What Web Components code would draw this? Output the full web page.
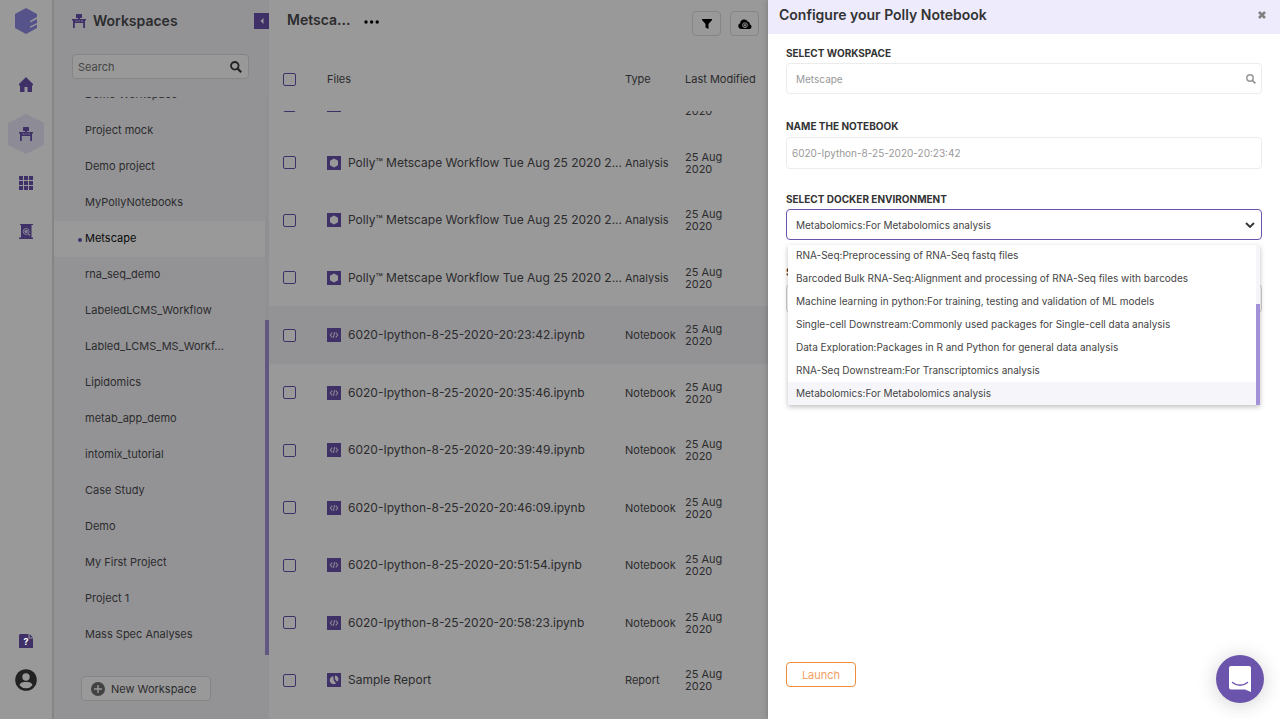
<!DOCTYPE html>
<html lang="en">
<head>
<meta charset="utf-8">
<title>Polly Workspaces</title>
<style>
  html, body { height: 100%; margin: 0; }
  body {
    font-family: Inter, "Liberation Sans", sans-serif;
    font-size: 11px;
    color: #4a4a4d;
    --purple: #6a53ae;
    --lavender: #edebfc;
    --panel: #f6f6fa;
    --thumb: #a391d8;
    --line: #dedede;
  }
</style>
</head>
<body>
<app-shell>
  <nav-rail slot="rail"></nav-rail>
  <workspace-panel slot="side">
    <workspace-item>Demo Workspace</workspace-item>
    <workspace-item>Project mock</workspace-item>
    <workspace-item>Demo project</workspace-item>
    <workspace-item>MyPollyNotebooks</workspace-item>
    <workspace-item selected>Metscape</workspace-item>
    <workspace-item>rna_seq_demo</workspace-item>
    <workspace-item>LabeledLCMS_Workflow</workspace-item>
    <workspace-item>Labled_LCMS_MS_Workf...</workspace-item>
    <workspace-item>Lipidomics</workspace-item>
    <workspace-item>metab_app_demo</workspace-item>
    <workspace-item>intomix_tutorial</workspace-item>
    <workspace-item>Case Study</workspace-item>
    <workspace-item>Demo</workspace-item>
    <workspace-item>My First Project</workspace-item>
    <workspace-item>Project 1</workspace-item>
    <workspace-item>Mass Spec Analyses</workspace-item>
  </workspace-panel>
  <file-browser></file-browser>
  <side-drawer slot="drawer" heading="Configure your Polly Notebook">
    <search-field label="SELECT WORKSPACE" value="Metscape"></search-field>
    <text-field label="NAME THE NOTEBOOK" value="6020-Ipython-8-25-2020-20:23:42"></text-field>
    <select-field open label="SELECT DOCKER ENVIRONMENT"></select-field>
    <select-field label="SELECT MACHINE"></select-field>
    <outline-button slot="footer">Launch</outline-button>
  </side-drawer>
</app-shell>
<chat-launcher></chat-launcher>

<script>
const ICONS = {
  logo: ['0 0 22 26', '<path d="M11 0 22 6v3l-7 4v1.500l7-3.500v4l-7 3.500V20l7-3.500V20L11 26 0 20V6z" fill="#8e8ae4"/>'],
  home: ['0 0 14 15', '<path d="M7 0 14 7v1.500h-1V15H8.500v-5h-3v5H1V8.500H0V7z"/>'],
  desk: ['0 0 14 14', '<path d="M4.500 0h5A.5.5 0 0 1 10 .500V4H4V.500A.5.500 0 0 1 4.500 0zM6 4h2v1H6z"/><path d="M0 5h14v1.500h-1V14h-1.800V9H2.800v5H1V6.500H0z"/><path d="M3.500 7h2M6.500 7h1.500M9 7h2" stroke="#cfc8ea" stroke-width="1"/>'],
  grid: ['0 0 14 14', '<path d="M0 0h4v4H0zM5 0h4v4H5zM10 0h4v4h-4zM0 5h4v4H0zM5 5h4v4H5zM10 5h4v4h-4zM0 10h4v4H0zM5 10h4v4H5zM10 10h4v4h-4z"/>'],
  report: ['0 0 14 15', '<path d="M1 0h13v1h-1.500v12.500H14V15H0v-1.500h2V1H1z"/><circle cx="7.200" cy="7.500" r="3" fill="none" stroke="#d9d3f0" stroke-width="1"/><circle cx="7.200" cy="7.500" r="1.800" fill="#d9d3f0"/><path d="m9.500 10 1.500 1.500" stroke="#d9d3f0" stroke-width="1.200"/>'],
  help: ['0 0 14 14', '<path d="M1 0h8.500v4.500H14V14H0V1z"/><path d="M10.500 0 14 3.500h-3.500z"/>'],
  user: ['0 0 22 22', '<circle cx="11" cy="11" r="10.800" fill="#3a3a3a"/><circle cx="11" cy="8" r="3.700" fill="#fff"/><path d="M4.500 16.200c1-3 3.500-3.200 6.500-3.200s5.500.2 6.500 3.200a8.500 8.500 0 0 1-13 0z" fill="#fff"/>'],
  search: ['0 0 12 12', '<circle cx="4.800" cy="4.800" r="3.800" fill="none" stroke="currentColor" stroke-width="1.800"/><path d="m7.600 7.600 3.600 3.600" stroke="currentColor" stroke-width="2.200"/>'],
  plus: ['0 0 14 14', '<circle cx="7" cy="7" r="7"/><path d="M7 3v8M3 7h8" stroke="#fff" stroke-width="1.400"/>'],
  caret: ['0 0 4 6', '<path d="M3.500 0v6L.5 3z"/>'],
  dots: ['0 0 16 4', '<circle cx="2" cy="2" r="1.700"/><circle cx="7.600" cy="2" r="1.700"/><circle cx="13.200" cy="2" r="1.700"/>'],
  filter: ['0 0 10 10', '<path d="M0 0h10v1L6.500 5v5L3.500 8.500V5L0 1z"/>'],
  cloud: ['0 0 14 10', '<path d="M3 10a3 3 0 0 1-.8-5.800A4 4 0 0 1 9.700 2.500 3 3 0 0 1 12 5.400 2.400 2.400 0 0 1 11.500 10z"/><circle cx="7" cy="6.200" r="2.400" fill="none" stroke="#fff" stroke-width=".9"/><path d="M7 4.800v2.800M5.600 6.200h2.800" stroke="#fff" stroke-width=".9"/>'],
  analysis: ['0 0 14 14', '<path d="M0 0h14v14H0z"/><path d="m7 2.500 4 2.200v4.600l-4 2.200-4-2.200V4.700z" fill="#fff"/>'],
  notebook: ['0 0 14 14', '<path d="M0 0h14v14H0z"/><path d="M5.200 4.700 3.300 7l1.900 2.300M8.800 4.700 10.700 7 8.800 9.300M7.600 4.200 6.400 9.800" fill="none" stroke="#e4def4" stroke-width="1.100"/>'],
  pie: ['0 0 14 14', '<path d="M0 0h14v14H0z"/><path d="M6.500 3.500V7L9 10.500A4 4 0 1 1 5 3.600zM8 2.500A4.500 4.500 0 0 1 11.500 7L10 8.800 8 6.300z" fill="#fff"/>'],
  close: ['0 0 8 8', '<path d="m1 1 6 6M7 1 1 7" stroke="currentColor" stroke-width="2.600"/>'],
  chevron: ['0 0 10 6', '<path d="m1 1 4 4 4-4" fill="none" stroke="currentColor" stroke-width="1.800"/>'],
  chat: ['0 0 22 26', '<path d="M2 0h18a2 2 0 0 1 2 2v24l-6-2.500H2a2 2 0 0 1-2-2V2a2 2 0 0 1 2-2z"/><path d="M3.500 16.500c4.500 3.600 10.500 3.600 15 0" fill="none" stroke="#6b54ab" stroke-width="1.500" stroke-linecap="round"/>']
};
const base = '*{box-sizing:border-box}:host([hidden]){display:none}button,input,select{font:inherit;color:inherit;margin:0}button{cursor:pointer}';
const define = (name, css, html) => customElements.define(name, class extends HTMLElement {
  constructor() { super(); this.attachShadow({ mode: 'open' }); }
  connectedCallback() {
    this.shadowRoot.innerHTML = `<style>${base}${css}</style>` + (typeof html === 'function' ? html(this) : html);
  }
});

define('ui-icon', ':host{display:inline-flex;flex:none;color:var(--purple)}svg{display:block}', el => {
  const [box, body] = ICONS[el.getAttribute('name')];
  const [, , w, h] = box.split(' ');
  return `<svg width="${w}" height="${h}" viewBox="${box}" fill="currentColor" aria-hidden="true">${body}</svg>`;
});

define('app-shell', `
  :host{display:grid;grid-template-columns:54px 215px minmax(0,1fr) 40%;grid-template-rows:minmax(0,1fr);height:100vh;position:relative;background:#fff;overflow:hidden}
  ::slotted(*){min-height:0;min-width:0}
  .scrim{position:absolute;inset:0;background:rgba(0,0,0,.4)}
  .drawer{display:grid;position:relative;z-index:1;grid-column:4}
`, `<slot name="rail"></slot><slot name="side"></slot><slot></slot><div class="scrim"></div><div class="drawer"><slot name="drawer"></slot></div>`);

define('nav-item', `
  :host{display:flex;height:49px;justify-content:center}
  a{display:grid;place-items:center;width:36px;color:#fff;text-decoration:none}
  a>*{grid-area:1/1}
  svg{display:none}
  :host([active]) svg{display:block}
  b{z-index:1;font-size:9px;padding-top:2px}
`, el => `<a href="#" aria-label="${el.getAttribute('label')}"><svg width="36" height="40" viewBox="0 0 36 40"><path d="m18 0 18 9v22l-18 9-18-9V9z" fill="#ebe8fa"/></svg><ui-icon name="${el.getAttribute('icon')}"></ui-icon><b><slot></slot></b></a>`);

define('nav-rail', `
  :host{display:block;border-right:2px solid var(--line);background:#fff}
  nav{display:flex;flex-direction:column;align-items:stretch;height:100%;padding:8px 0 20px}
  .logo{align-self:center;margin-bottom:26px}
  .end{margin-top:auto}
  .end nav-item{height:39px}
`, `<nav><ui-icon class="logo" name="logo"></ui-icon>
  <nav-item icon="home" label="Home"></nav-item><nav-item active icon="desk" label="Workspaces"></nav-item>
  <nav-item icon="grid" label="Applications"></nav-item><nav-item icon="report" label="Reports"></nav-item>
  <div class="end"><nav-item icon="help" label="Help">?</nav-item><nav-item icon="user" label="Account"></nav-item></div></nav>`);

define('workspace-item', `
  :host{display:block;flex:none}
  a{display:flex;align-items:center;height:36px;padding:0 0 2px 24px;color:inherit;text-decoration:none;white-space:nowrap}
  a::before{content:"";width:4px;height:4px;border-radius:50%;margin:3px 3px 0 0}
  :host([selected]) a{background:#fff;color:#111}
  :host([selected]) a::before{background:var(--purple)}
`, `<a href="#"><slot></slot></a>`);

define('workspace-panel', `
  :host{display:flex;flex-direction:column;background:var(--panel)}
  header{display:flex;align-items:center;height:42px;padding-left:18px}
  h2{flex:1;margin:0 0 0 7px;font-size:14px;line-height:20px;font-weight:600}
  header button{display:grid;place-items:center;width:15px;height:16px;padding:0;border:0;background:var(--purple)}
  header button ui-icon{color:#fff}
  label{display:flex;align-items:center;margin:12px 20px 18px 18px;height:25px;padding:0 6px 0 5px;border:1px solid var(--line);border-radius:4px;background:#fff}
  label ui-icon{color:#3a3a3a}
  input{flex:1;min-width:0;border:0;padding:0;background:none;outline:0}
  input::placeholder{color:#757575;opacity:1}
  .scroll{flex:1;min-height:0;display:flex}
  .list{flex:1;display:flex;flex-direction:column;justify-content:flex-end;overflow:hidden;padding-bottom:2px}
  .track{width:4px;display:flex;flex-direction:column;justify-content:flex-end;background:#f1f1f6}
  .thumb{height:60%;background:var(--thumb)}
  footer{padding:21px 27px 18px}
  footer button{display:flex;align-items:center;gap:6px;height:25px;width:130px;padding:0 9px;border:1px solid var(--line);border-radius:4px;background:#fff}
  footer ui-icon{color:#6e6e6e}
`, `<header><ui-icon name="desk"></ui-icon><h2>Workspaces</h2><button aria-label="Collapse"><ui-icon name="caret"></ui-icon></button></header>
  <label><input type="text" placeholder="Search" aria-label="Search"><ui-icon name="search"></ui-icon></label>
  <div class="scroll"><div class="list"><slot></slot></div><div class="track"><div class="thumb"></div></div></div>
  <footer><button><ui-icon name="plus"></ui-icon>New Workspace</button></footer>`);

const wf = ['analysis', 'Polly™ Metscape Workflow Tue Aug 25 2020 2...', 'Analysis'];
const nb = t => ['notebook', `6020-Ipython-8-25-2020-20:${t}.ipynb`, 'Notebook'];
const FILES = [['analysis', '', ''], wf, wf, wf, nb('23:42'), nb('35:46'), nb('39:49'), nb('46:09'), nb('51:54'), nb('58:23'), ['pie', 'Sample Report', 'Report']];

define('file-browser', `
  :host{display:flex;flex-direction:column;background:#fff}
  header{display:flex;align-items:center;height:47px;padding:0 9px 0 18px}
  h1{margin:0 14px 7px 0;font-size:14px;line-height:20px;font-weight:600}
  .more{border:0;padding:0;background:none;margin:0 auto 7px 0}
  .tool{display:grid;place-items:center;width:29px;height:25px;margin-left:9px;padding:0;border:1px solid var(--line);border-radius:4px;background:#fff}
  header ui-icon{color:#000}
  table{flex:1;min-height:0;display:flex;flex-direction:column;padding-bottom:10px;font-size:12px}
  thead{flex:none;height:64px;font-size:11px}
  tbody{flex:1;min-height:0;display:flex;flex-direction:column;justify-content:flex-end;overflow:hidden}
  tr{display:grid;grid-template-columns:44px 298px 60px minmax(0,1fr);align-items:center;padding-left:14px;flex:none}
  thead tr{height:100%}
  tbody tr{height:8vh}
  tr.on{background:var(--panel)}
  th,td{padding:0;text-align:left;font-weight:400;line-height:12px;white-space:nowrap}
  td.name{display:flex;align-items:center;gap:7px}
  td.kind{font-size:11px}
  td.date{width:48px;white-space:normal;font-size:11px}
  input{display:block;appearance:none;width:13px;height:13px;border:1px solid var(--purple);border-radius:2px;background:#fff}
`, `<header><h1>Metsca...</h1><button class="more" aria-label="More"><ui-icon name="dots"></ui-icon></button>
  <button class="tool" aria-label="Filter"><ui-icon name="filter"></ui-icon></button><button class="tool" aria-label="Upload"><ui-icon name="cloud"></ui-icon></button></header>
  <table><thead><tr><th><input type="checkbox" aria-label="Select all"></th><th>Files</th><th>Type</th><th>Last Modified</th></tr></thead><tbody>
  ${FILES.map(([i, n, k], x) => `<tr${x === 4 ? ' class="on"' : ''}><td><input type="checkbox" aria-label="Select ${n || 'file'}"></td><td class="name"><ui-icon name="${i}"></ui-icon>${n}</td><td class="kind">${k}</td><td class="date">25 Aug 2020</td></tr>`).join('')}
  </tbody></table>`);

define('side-drawer', `
  :host{display:flex;flex-direction:column;background:#fff;box-shadow:0 0 6px rgba(0,0,0,.25)}
  header{display:flex;align-items:center;justify-content:space-between;padding:5px 14px 9px 11px;background:var(--lavender)}
  h2{margin:0;font-size:14px;line-height:20px;font-weight:600;color:#333}
  header button{border:0;padding:0;background:none}
  header ui-icon{color:#808080}
  .body{flex:1;padding:13px 18px 0}
  footer{padding:0 18px 32px}
`, el => `<header><h2>${el.getAttribute('heading')}</h2><button aria-label="Close"><ui-icon name="close"></ui-icon></button></header><div class="body"><slot></slot></div><footer><slot name="footer"></slot></footer>`);

const field = `
  :host{display:block;min-height:73px;font-size:10px}
  label{display:block;margin-bottom:4px;font-size:10px;line-height:12px;font-weight:700;color:#333}
  .box{position:relative;display:flex;align-items:center;height:31px;border:1px solid #ececec;border-radius:4px;color:#999;background:#fff}
  input,select{flex:1;min-width:0;height:100%;padding:0 9px;border:0;background:none;outline:0}
`;
define('search-field', field + '.box ui-icon{color:#999;margin-right:5px;width:10px}', el => `<label for="f">${el.getAttribute('label')}</label><div class="box"><input id="f" type="text" value="${el.getAttribute('value')}"><ui-icon name="search"></ui-icon></div>`);
define('text-field', field + 'label{margin-bottom:5px}.box{height:32px}input{padding:0 5px}', el => `<label for="f">${el.getAttribute('label')}</label><div class="box"><input id="f" type="text" value="${el.getAttribute('value')}"></div>`);

const ENVS = [
  'RNA-Seq:Preprocessing of RNA-Seq fastq files',
  'Barcoded Bulk RNA-Seq:Alignment and processing of RNA-Seq files with barcodes',
  'Machine learning in python:For training, testing and validation of ML models',
  'Single-cell Downstream:Commonly used packages for Single-cell data analysis',
  'Data Exploration:Packages in R and Python for general data analysis',
  'RNA-Seq Downstream:For Transcriptomics analysis',
  'Metabolomics:For Metabolomics analysis'
];
define('select-field', field + `
  select{appearance:none;color:#444}
  .box>ui-icon{color:#333;margin-right:6px}
  :host([open]) .box{border-color:var(--purple)}
  :host(:not([open])) .box{border-color:#ccc;margin-top:6px;height:29px}
  :host([open]) .box{z-index:1}
  .menu{position:absolute;top:calc(100% + 6px);left:1px;right:1px;height:160px;display:flex;background:#fff;color:#444;box-shadow:0 2px 5px rgba(0,0,0,.25)}
  ul{flex:1;margin:0;padding:0;list-style:none;display:flex;flex-direction:column;justify-content:flex-end;overflow:hidden}
  li{flex:none;line-height:23px;padding-left:8px;white-space:nowrap}
  li[aria-selected=true]{background:var(--panel)}
  .track{width:4px;background:var(--panel);display:flex;align-items:flex-end}
  .thumb{width:100%;height:63%;background:var(--thumb)}
`, el => {
  const open = el.hasAttribute('open');
  return `<label for="f">${el.getAttribute('label')}</label><div class="box"><select id="f">${open ? `<option>${ENVS[6]}</option>` : ''}</select><ui-icon name="chevron"></ui-icon>
  ${open ? `<div class="menu"><ul role="listbox" aria-label="Environments">${ENVS.map((e, i) => `<li role="option" aria-selected="${i === 6}">${e}</li>`).join('')}</ul><div class="track"><div class="thumb"></div></div></div>` : ''}</div>`;
});

define('outline-button', `:host{display:inline-block;vertical-align:top}
  button{display:block;width:70px;height:25px;padding:0;border:1px solid #ee8d3c;border-radius:4px;background:#fff;color:#f0a060}`, `<button><slot></slot></button>`);

define('chat-launcher', `:host{position:fixed;right:16px;bottom:16px;z-index:2}
  button{display:grid;place-items:center;width:48px;height:48px;padding:0;border:0;border-radius:50%;background:#6b54ab;box-shadow:0 2px 20px rgba(0,0,0,.18)}
  ui-icon{color:#fff}`, `<button aria-label="Open chat"><ui-icon name="chat"></ui-icon></button>`);
</script>
</body>
</html>
